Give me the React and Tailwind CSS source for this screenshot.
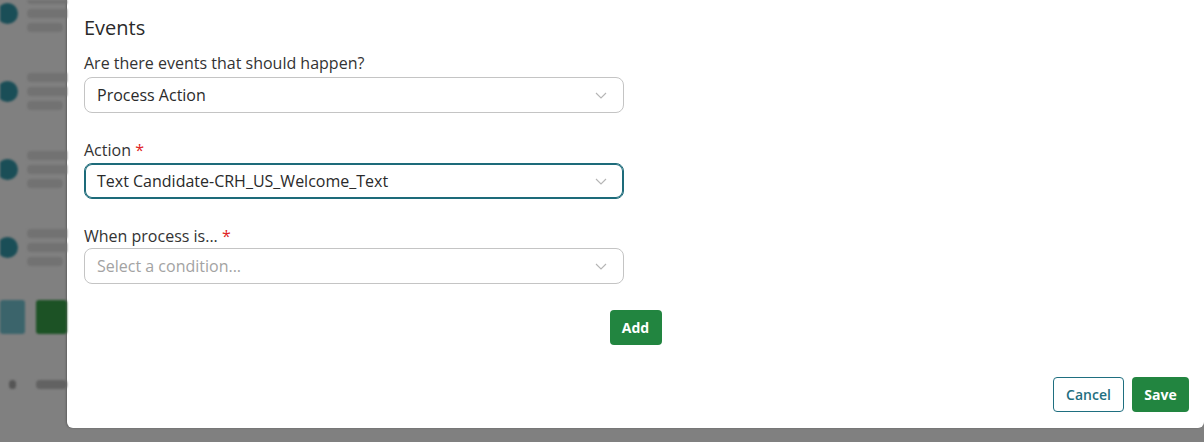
import React from "react";

function Chevron() {
  return (
    <svg width="12" height="7" viewBox="0 0 12 7" fill="none" className="shrink-0">
      <path d="M1 1l5 5 5-5" stroke="#b5b5b5" strokeWidth="1.1" />
    </svg>
  );
}

function Select({ value, placeholder, focused }) {
  return (
    <div
      className={
        "flex h-[36px] w-[540px] items-center justify-between rounded-[8px] border bg-white pl-[12px] pr-[16px] " +
        (focused ? "border-[#1d6b7a] shadow-[0_0_0_1px_#1d6b7a_inset]" : "border-[#c4c4c4]")
      }
    >
      {value ? (
        <span className="text-[16px] text-[#2a2a2a]">{value}</span>
      ) : (
        <span className="text-[16px] text-[#a3a3a3]">{placeholder}</span>
      )}
      <Chevron />
    </div>
  );
}

function BgItem() {
  return (
    <div className="flex h-[78px] items-center gap-[9px]">
      <div className="ml-[-3px] h-[21px] w-[21px] shrink-0 rounded-full bg-[#1a4e57]" />
      <div className="flex flex-col gap-[5px]">
        <div className="h-[9px] w-[44px] rounded-sm bg-[#727272]" />
        <div className="h-[9px] w-[44px] rounded-sm bg-[#727272]" />
        <div className="h-[9px] w-[36px] rounded-sm bg-[#727272]" />
      </div>
    </div>
  );
}

export default function App() {
  return (
    <div
      className="flex h-[442px] w-[1204px] overflow-hidden bg-[#808080]"
      style={{ fontFamily: '"Open Sans", "Noto Sans", sans-serif' }}
    >
      <div className="flex w-[67px] shrink-0 flex-col overflow-hidden blur-[1px]">
        <div className="mt-[-26px] flex flex-col">
          <BgItem />
          <BgItem />
          <BgItem />
          <BgItem />
        </div>
        <div className="mt-[14px] flex gap-[11px]">
          <div className="h-[34px] w-[33px] rounded-[3px] bg-[#3b646b]" />
          <div className="h-[34px] w-[40px] rounded-[3px] bg-[#1c5225]" />
        </div>
        <div className="mt-[46px] flex items-center gap-[20px] pl-[9px]">
          <div className="h-[9px] w-[9px] rounded-sm bg-[#555]" />
          <div className="h-[9px] w-[40px] rounded-sm bg-[#626262]" />
        </div>
      </div>
      <div className="flex h-[428px] flex-1 flex-col rounded-b-[6px] bg-white pl-[17px] pr-[15px] shadow-[-1px_0_2px_rgba(0,0,0,0.25)]">
        <h2 className="mt-[14px] text-[20px] leading-[28px] text-[#2a2a2a]">Events</h2>
        <label className="mt-[9px] text-[16px] leading-[24px] text-[#333]">
          Are there events that should happen?
        </label>
        <div className="mt-[2px]">
          <Select value="Process Action" />
        </div>
        <label className="mt-[25px] text-[16px] leading-[24px] text-[#333]">
          Action <span className="text-[#e02424]">*</span>
        </label>
        <div className="mt-[1px]">
          <Select value="Text Candidate-CRH_US_Welcome_Text" focused />
        </div>
        <label className="mt-[25px] text-[16px] leading-[24px] text-[#333]">
          When process is... <span className="text-[#e02424]">*</span>
        </label>
        <div className="mt-[0px]">
          <Select placeholder="Select a condition..." />
        </div>
        <div className="mt-[26px] flex justify-center pr-[2px]">
          <button className="h-[35px] w-[52px] rounded-[4px] bg-[#228540] text-[14px] font-bold text-white">
            Add
          </button>
        </div>
        <div className="mt-[32px] flex justify-end gap-[8px]">
          <button className="h-[35px] w-[71px] rounded-[4px] border border-[#1f6f80] bg-white text-[14px] font-semibold text-[#1f6f80]">
            Cancel
          </button>
          <button className="h-[35px] w-[57px] rounded-[4px] bg-[#228540] text-[14px] font-bold text-white">
            Save
          </button>
        </div>
      </div>
    </div>
  );
}
